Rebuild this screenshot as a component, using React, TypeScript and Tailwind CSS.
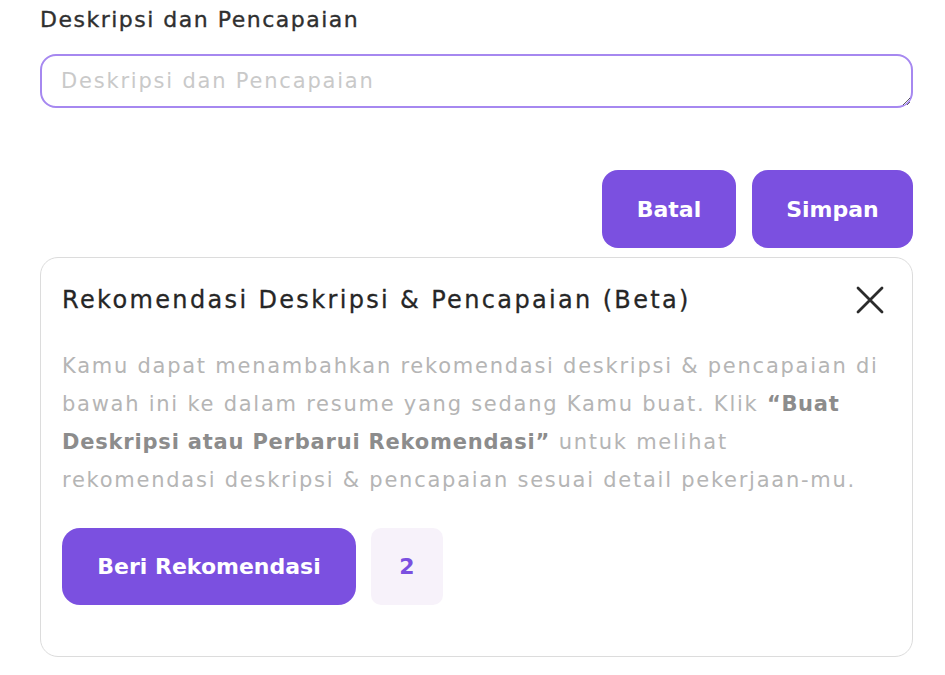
import { useState } from 'react'

function CloseIcon() {
  return (
    <svg width="28" height="28" viewBox="0 0 28 28" fill="none">
      <path d="M2 2L26 26M26 2L2 26" stroke="#2b2b2b" strokeWidth="2.8" strokeLinecap="round" />
    </svg>
  )
}

export default function App() {
  const [desc, setDesc] = useState('')

  return (
    <div className="min-h-[675px] bg-white pl-10 pr-8 pt-[6px] font-['DejaVu_Sans',sans-serif]">
      <label className="block text-[22px] leading-[28px] tracking-[1.5px] text-[#2f2f2f] [-webkit-text-stroke:0.35px_#2f2f2f]">
        Deskripsi dan Pencapaian
      </label>

      <textarea
        value={desc}
        onChange={(e) => setDesc(e.target.value)}
        placeholder="Deskripsi dan Pencapaian"
        rows={1}
        className="mt-[20px] block h-[54px] w-full rounded-[16px] border-2 border-[#a688f0] px-[19px] py-[11px] text-[21px] leading-[28px] tracking-[1.8px] text-[#333] outline-none placeholder:text-[#c9c9c9]"
      />

      <div className="mt-[62px] flex justify-end gap-4">
        <button className="h-[78px] w-[134px] rounded-[16px] bg-[#7b50e0] text-[22px] font-bold text-white">
          Batal
        </button>
        <button className="h-[78px] w-[161px] rounded-[16px] bg-[#7b50e0] text-[22px] font-bold text-white">
          Simpan
        </button>
      </div>

      <div className="mt-[9px] rounded-[18px] border border-[#dcdcdc] px-[21px] pt-[26px] pb-[51px]">
        <div className="flex items-center justify-between">
          <h2 className="text-[24px] leading-[32px] tracking-[2.35px] text-[#262626] [-webkit-text-stroke:0.3px_#262626]">
            Rekomendasi Deskripsi &amp; Pencapaian (Beta)
          </h2>
          <button className="mr-[7px]">
            <CloseIcon />
          </button>
        </div>

        <p className="mt-[31px] whitespace-nowrap text-[21px] leading-[38px] tracking-[1.75px] text-[#b5b5b5]">
          Kamu dapat menambahkan rekomendasi deskripsi &amp; pencapaian di
          <br />
          bawah ini ke dalam resume yang sedang Kamu buat. Klik{' '}
          <span className="font-bold tracking-[0.7px] text-[#8c8c8c]">“Buat</span>
          <br />
          <span className="font-bold tracking-[0.8px] text-[#8c8c8c]">
            Deskripsi atau Perbarui Rekomendasi”
          </span>{' '}
          untuk melihat
          <br />
          rekomendasi deskripsi &amp; pencapaian sesuai detail pekerjaan-mu.
        </p>

        <div className="mt-[29px] flex gap-[15px]">
          <button className="h-[77px] w-[294px] rounded-[18px] bg-[#7b50e0] text-[22px] font-bold text-white">
            Beri Rekomendasi
          </button>
          <div className="flex h-[77px] w-[72px] items-center justify-center rounded-[10px] bg-[#f7f2fa] text-[22px] font-bold text-[#7b50e0]">
            2
          </div>
        </div>
      </div>
    </div>
  )
}
